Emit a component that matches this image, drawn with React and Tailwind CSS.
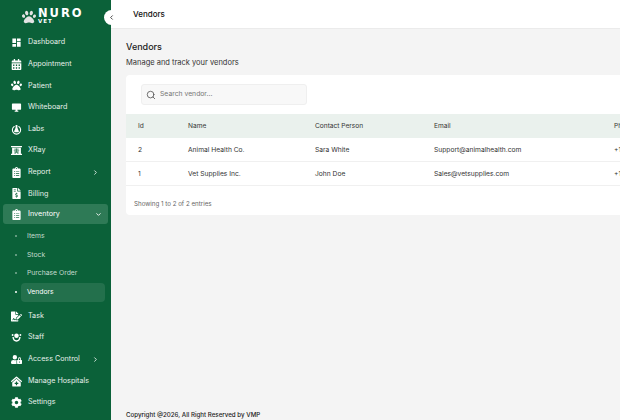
import React from "react";
import { Search, ChevronRight, ChevronDown, ChevronLeft } from "lucide-react";
import {
  FaCalendarAlt,
  FaPaw,
  FaXRay,
  FaClipboardList,
  FaFileInvoiceDollar,
  FaFileSignature,
  FaUserLock,
  FaClinicMedical,
  FaCog,
} from "react-icons/fa";
import { MdDashboard, MdDesktopWindows } from "react-icons/md";

function LabsIcon({ className }) {
  return (
    <svg viewBox="0 0 24 24" className={className} fill="none" stroke="currentColor">
      <path d="M7 5.5a9 9 0 1 0 10 0" strokeWidth="2.4" strokeLinecap="round" />
      <path d="M10 2h4v6l3 7a2 2 0 0 1-2 3H9a2 2 0 0 1-2-3l3-7z" fill="currentColor" strokeWidth="0" />
    </svg>
  );
}

function StaffIcon({ className }) {
  return (
    <svg viewBox="0 0 24 24" className={className} fill="currentColor">
      <circle cx="12" cy="8" r="5" />
      <path d="M3 11c.5 6.5 4 10 9 10s8.500-3.500 9-10h-3c-.5 4.500-2.500 7-6 7s-5.500-2.500-6-7z" />
      <circle cx="3.500" cy="6.500" r="2" />
      <circle cx="20.500" cy="6.500" r="2" />
    </svg>
  );
}

const topItems = [
  { label: "Dashboard", icon: MdDashboard },
  { label: "Appointment", icon: FaCalendarAlt },
  { label: "Patient", icon: FaPaw },
  { label: "Whiteboard", icon: MdDesktopWindows },
  { label: "Labs", icon: LabsIcon },
  { label: "XRay", icon: FaXRay },
  { label: "Report", icon: FaClipboardList, arrow: true },
  { label: "Billing", icon: FaFileInvoiceDollar },
];

const subItems = ["Items", "Stock", "Purchase Order", "Vendors"];

const bottomItems = [
  { label: "Task", icon: FaFileSignature },
  { label: "Staff", icon: StaffIcon },
  { label: "Access Control", icon: FaUserLock, arrow: true },
  { label: "Manage Hospitals", icon: FaClinicMedical },
  { label: "Settings", icon: FaCog },
];

const vendors = [
  { id: 2, name: "Animal Health Co.", contact: "Sara White", email: "Support@animalhealth.com", phone: "+1 555-0102" },
  { id: 1, name: "Vet Supplies Inc.", contact: "John Doe", email: "Sales@vetsupplies.com", phone: "+1 555-0101" },
];

function NavItem({ item }) {
  const Icon = item.icon;
  return (
    <div className="flex h-[21.6px] items-center pl-[11px] pr-[12px] text-[7.2px] text-[#e6f0ea]">
      <Icon className="h-[11px] w-[11px] shrink-0 text-white" />
      <span className="ml-[6px] flex-1">{item.label}</span>
      {item.arrow && <ChevronRight className="h-[7px] w-[7px]" strokeWidth={3} />}
    </div>
  );
}

export default function App() {
  return (
    <div className="flex h-[420px] w-[620px] overflow-hidden bg-[#f4f4f4] font-['Inter',sans-serif]">
      <aside className="flex w-[111px] shrink-0 flex-col bg-[#0b6139]">
        <div className="flex h-[32px] items-start pl-[22px] pt-[8px] text-white">
          <FaPaw className="mt-[2px] h-[14px] w-[14px] text-[#e4e4e4]" />
          <div className="ml-[2px] flex flex-col font-['DejaVu_Sans',sans-serif] font-bold">
            <span className="text-[11.5px] leading-[10px] tracking-[2px]">NURO</span>
            <span className="text-[5.5px] leading-[6px] tracking-[1px]">VET</span>
          </div>
        </div>
        {topItems.map((item) => (
          <NavItem key={item.label} item={item} />
        ))}
        <div className="mx-[3px] -mt-[1px] flex h-[20px] items-center rounded-[3px] bg-[#2e7a56] pl-[8px] pr-[6px] pt-[1px] text-[7.2px] text-white">
          <FaClipboardList className="h-[11px] w-[11px] shrink-0" />
          <span className="ml-[6px] flex-1">Inventory</span>
          <ChevronDown className="h-[7px] w-[7px]" strokeWidth={3} />
        </div>
        <div className="mt-[3px] flex flex-col">
          {subItems.map((label) => {
            const active = label === "Vendors";
            return (
              <div key={label} className="flex h-[18.7px] items-center pl-[15px] pr-[6px] text-[6.8px]">
                <span className={`h-[2px] w-[2px] rounded-full ${active ? "bg-white" : "bg-[#7fae97]"}`} />
                <span
                  className={`ml-[4px] flex h-[18.7px] flex-1 items-center rounded-[4px] pl-[6px] ${
                    active ? "bg-[#23704c] text-white" : "text-[#c5dbcf]"
                  }`}
                >
                  {label}
                </span>
              </div>
            );
          })}
        </div>
        <div className="mt-[4px] flex flex-col">
          {bottomItems.map((item) => (
            <NavItem key={item.label} item={item} />
          ))}
        </div>
      </aside>

      <div className="relative flex min-w-0 flex-1 flex-col">
        <button className="absolute left-[-7px] top-[10px] flex h-[15px] w-[15px] items-center justify-center rounded-full bg-white">
          <ChevronLeft className="h-[7px] w-[7px] text-[#333]" strokeWidth={3} />
        </button>
        <header className="flex h-[29px] shrink-0 items-center border-b border-[#ebebeb] bg-white pl-[22px] text-[8px] font-medium text-[#111]">
          Vendors
        </header>
        <main className="flex flex-1 flex-col pl-[15px] pt-[11px]">
          <h1 className="text-[9px] font-medium leading-[13px] text-[#222]">Vendors</h1>
          <p className="mt-[4px] text-[7.5px] leading-[12px] text-[#333]">Manage and track your vendors</p>
          <section className="mt-[6px] w-[640px] rounded-[4px] bg-white">
            <div className="px-[15px] py-[9px]">
              <div className="flex h-[21px] w-[166px] items-center rounded-[3px] border border-[#efefef] bg-[#f8f8f8] pl-[4px] text-[6.8px] text-[#777]">
                <Search className="h-[10px] w-[10px] text-[#555]" />
                <span className="ml-[4px]">Search vendor...</span>
              </div>
            </div>
            <div className="grid h-[24px] grid-cols-[50px_127px_119px_180px_1fr] items-center bg-[#eaf1ed] pl-[12px] pt-[1px] text-[6.6px] text-[#333]">
              <span>Id</span>
              <span>Name</span>
              <span>Contact Person</span>
              <span>Email</span>
              <span>Phone</span>
            </div>
            {vendors.map((v) => (
              <div
                key={v.id}
                className="grid h-[24px] grid-cols-[50px_127px_119px_180px_1fr] items-center border-b border-[#f0f0f0] pl-[12px] pt-[1px] text-[6.7px] text-[#333] last:border-b-0"
              >
                <span>{v.id}</span>
                <span>{v.name}</span>
                <span>{v.contact}</span>
                <span>{v.email}</span>
                <span>{v.phone}</span>
              </div>
            ))}
            <div className="h-[29px] pl-[8px] pt-[13px] text-[6.2px] leading-[10px] text-[#666]">
              Showing 1 to 2 of 2 entries
            </div>
          </section>
          <footer className="mt-auto text-[6.2px] font-medium leading-[10px] text-[#222]">
            Copyright @2026, All Right Reserved by VMP
          </footer>
        </main>
      </div>
    </div>
  );
}
